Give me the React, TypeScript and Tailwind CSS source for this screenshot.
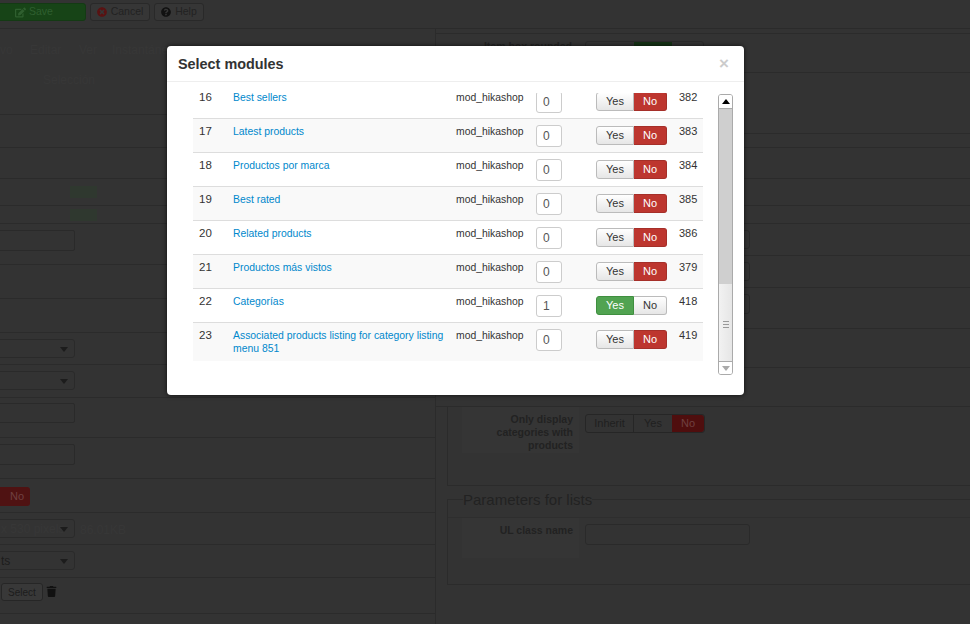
import { FaEdit, FaTimesCircle, FaQuestionCircle, FaTrash } from "react-icons/fa";

interface Module {
  num: number;
  name: string;
  value: number;
  id: number;
  enabled?: boolean;
}

const modules: Module[] = [
  { num: 16, name: "Best sellers", value: 0, id: 382 },
  { num: 17, name: "Latest products", value: 0, id: 383 },
  { num: 18, name: "Productos por marca", value: 0, id: 384 },
  { num: 19, name: "Best rated", value: 0, id: 385 },
  { num: 20, name: "Related products", value: 0, id: 386 },
  { num: 21, name: "Productos más vistos", value: 0, id: 379 },
  { num: 22, name: "Categorías", value: 1, id: 418, enabled: true },
  { num: 23, name: "Associated products listing for category listing menu 851", value: 0, id: 419 },
];

function Caret() {
  return <span className="absolute right-[6px] top-[7px] h-0 w-0 border-x-[4px] border-t-[5px] border-x-transparent border-t-[#1c1c1c]" />;
}

function ModuleRow({ item }: { item: Module }) {
  return (
    <div
      className={`flex shrink-0 border-t border-[#ddd] text-[10.4px] leading-[13px] text-[#333] ${
        item.num === 23 ? "h-[39px]" : "h-[34px]"
      } ${item.num % 2 === 1 ? "bg-[#f9f9f9]" : "bg-white"}`}
    >
      <div className="w-[40px] pl-[6px] pt-[6px] text-[11.5px]">{item.num}</div>
      <div className="w-[223px] pt-[6px] pr-[4px]">
        <a className="text-[#0088cc]">{item.name}</a>
      </div>
      <div className="w-[80px] pt-[6px]">mod_hikashop</div>
      <div className="w-[60px] pt-[6px]">
        <input
          readOnly
          value={item.value}
          className="h-[22px] w-[26px] rounded-[3px] border border-[#ccc] bg-white px-[6px] text-[12px] text-[#555]"
        />
      </div>
      <div className="flex w-[83px] pt-[7px] text-[11px]">
        <span
          className={`flex h-[19px] w-[38px] items-center justify-center rounded-l-[3px] border ${
            item.enabled
              ? "border-[#3f8f3f] bg-[#51a351] text-white"
              : "border-[#bbb] bg-gradient-to-b from-white to-[#e6e6e6] text-[#333]"
          }`}
        >
          Yes
        </span>
        <span
          className={`flex h-[19px] w-[33px] items-center justify-center rounded-r-[3px] border border-l-0 ${
            item.enabled
              ? "border-[#bbb] bg-gradient-to-b from-white to-[#e6e6e6] text-[#333]"
              : "border-[#a52f29] bg-[#bd362f] text-white"
          }`}
        >
          No
        </span>
      </div>
      <div className="pt-[6px] text-[11px]">{item.id}</div>
    </div>
  );
}

function Scrollbar() {
  return (
    <div className="mt-[1px] flex h-[281px] w-[15px] flex-col overflow-hidden rounded-[3px] border border-[#aaa]">
      <div className="flex h-[14px] shrink-0 items-center justify-center border-b border-[#aaa] bg-white">
        <span className="h-0 w-0 border-x-[4px] border-b-[5px] border-x-transparent border-b-black" />
      </div>
      <div className="h-[175px] shrink-0 bg-[#cfcfcf]" />
      <div className="flex h-[77px] shrink-0 items-center justify-center bg-gradient-to-r from-[#f2f2f2] to-[#e6e6e6]">
        <div className="flex flex-col gap-[2px] pt-[4px]">
          <span className="h-px w-[6px] bg-[#999]" />
          <span className="h-px w-[6px] bg-[#999]" />
          <span className="h-px w-[6px] bg-[#999]" />
        </div>
      </div>
      <div className="flex flex-1 items-center justify-center border-t border-[#aaa] bg-white">
        <span className="h-0 w-0 border-x-[4px] border-t-[5px] border-x-transparent border-t-[#aaa]" />
      </div>
    </div>
  );
}

export default function App() {
  return (
    <div className="relative h-[624px] w-[970px] overflow-hidden bg-[#333] font-['Liberation_Sans',Arial,sans-serif] text-[#222]">
      {/* toolbar */}
      <div className="flex h-[29px] gap-[4px] border-b border-[#2b2b2b] pt-[3px] text-[10.5px]">
        <div className="ml-[-10px] flex h-[18px] w-[96px] items-center gap-[3px] rounded-[3px] border border-[#143a14] bg-[#174417] pl-[24px] text-[#2f5f2f]">
          <FaEdit className="text-[11px]" />
          Save
        </div>
        <div className="flex h-[18px] w-[60px] items-center justify-center gap-[4px] rounded-[3px] border border-[#292929] bg-[#363636]">
          <FaTimesCircle className="text-[10px] text-[#5a1212]" />
          Cancel
        </div>
        <div className="flex h-[18px] w-[50px] items-center justify-center gap-[4px] rounded-[3px] border border-[#292929] bg-[#363636]">
          <FaQuestionCircle className="text-[10px] text-[#111]" />
          Help
        </div>
      </div>

      <div className="flex">
        {/* left column */}
        <div className="h-[595px] w-[436px] shrink-0 border-r border-[#2b2b2b] text-[10.5px]">
          <div className="h-[86px] border-b border-[#2b2b2b] pt-[12px] text-[12px] text-[#373737]">
            <div className="flex">
              <span className="w-[30px]">vo</span>
              <span className="w-[49px]">Editar</span>
              <span className="w-[33px]">Ver</span>
              <span>Instantánea</span>
            </div>
            <div className="ml-[43px] mt-[12px]">Selección</div>
          </div>
          <div className="h-[33px] border-b border-[#2b2b2b]" />
          <div className="h-[31px] border-b border-[#2b2b2b]" />
          <div className="flex h-[27px] items-center border-b border-[#2b2b2b] pl-[70px]">
            <span className="h-[12px] w-[27px] bg-[#2f382f]" />
          </div>
          <div className="flex h-[18px] items-center border-b border-[#2b2b2b] pl-[70px]">
            <span className="h-[12px] w-[27px] bg-[#2f382f]" />
          </div>
          <div className="h-[41px] border-b border-[#2b2b2b] pt-[6px]">
            <div className="ml-[-15px] h-[21px] w-[90px] rounded-[2px] border border-[#2a2a2a]" />
          </div>
          <div className="h-[34px] border-b border-[#2b2b2b]" />
          <div className="h-[34px] border-b border-[#2b2b2b]" />
          <div className="h-[32px] border-b border-[#2b2b2b] pt-[6px]">
            <div className="relative ml-[-15px] h-[19px] w-[90px] rounded-[3px] border border-[#2a2a2a]">
              <Caret />
            </div>
          </div>
          <div className="h-[33px] border-b border-[#2b2b2b] pt-[6px]">
            <div className="relative ml-[-15px] h-[19px] w-[90px] rounded-[3px] border border-[#2a2a2a]">
              <Caret />
            </div>
          </div>
          <div className="h-[40px] border-b border-[#2b2b2b] pt-[5px]">
            <div className="ml-[-15px] h-[20px] w-[90px] rounded-[2px] border border-[#2a2a2a]" />
          </div>
          <div className="h-[41px] border-b border-[#2b2b2b] pt-[6px]">
            <div className="ml-[-15px] h-[21px] w-[90px] rounded-[2px] border border-[#2a2a2a]" />
          </div>
          <div className="h-[34px] border-b border-[#2b2b2b] pt-[8px]">
            <div className="flex h-[19px] w-[30px] items-center justify-end rounded-r-[3px] bg-[#4f1212] pr-[6px] text-[11px] text-[#704040]">
              No
            </div>
          </div>
          <div className="flex h-[32px] items-start border-b border-[#2b2b2b] pt-[6px]">
            <div className="relative ml-[-15px] flex h-[19px] w-[90px] items-center justify-start overflow-hidden whitespace-nowrap rounded-[3px] border border-[#2a2a2a] pl-[15px] text-[12px] text-[#373737]">
              x 530 pixels
              <Caret />
            </div>
            <span className="ml-[5px] pt-[2px] text-[12px] text-[#373737]">86.01KB</span>
          </div>
          <div className="h-[33px] border-b border-[#2b2b2b] pt-[6px]">
            <div className="relative ml-[-15px] flex h-[19px] w-[90px] items-center rounded-[3px] border border-[#2a2a2a] pl-[15px] text-[12px] text-[#1c1c1c]">
              ts
              <Caret />
            </div>
          </div>
          <div className="flex h-[36px] items-start gap-[3px] border-b border-[#2b2b2b] pl-px pt-[5px]">
            <div className="flex h-[18px] w-[42px] items-center justify-center rounded-[3px] border border-[#262626] bg-[#383838] text-[10px] text-[#1c1c1c]">
              Select
            </div>
            <FaTrash className="mt-[3px] text-[11px] text-[#111]" />
          </div>
        </div>

        {/* right column */}
        <div className="flex-1 text-[10.5px]">
          <div className="h-[5px] border-b border-[#2b2b2b]" />
          <div className="flex h-[39px] border-b border-[#2b2b2b] pt-[7px]">
            <div className="w-[136px] text-right font-bold leading-[11px]">Item box rounded</div>
            <div className="ml-[13px] flex h-[19px] w-[119px] overflow-hidden rounded-[3px] border border-[#2a2a2a]">
              <span className="w-[48px]" />
              <span className="w-[38px] bg-[#163316]" />
            </div>
          </div>
          <div className="h-[61px] border-b border-[#2b2b2b]" />
          <div className="h-[14px] border-b border-[#2b2b2b]" />
          <div className="h-[31px] border-b border-[#2b2b2b]" />
          <div className="h-[27px] border-b border-[#2b2b2b]" />
          <div className="h-[18px] border-b border-[#2b2b2b]" />
          <div className="h-[32px] border-b border-[#2b2b2b] pt-[6px]">
            <div className="ml-[149px] h-[19px] w-[165px] rounded-[3px] border border-[#2a2a2a]" />
          </div>
          <div className="h-[32px] border-b border-[#2b2b2b] pt-[6px]">
            <div className="ml-[149px] h-[19px] w-[165px] rounded-[3px] border border-[#2a2a2a]" />
          </div>
          <div className="h-[41px] border-b border-[#2b2b2b] pt-[6px]">
            <div className="ml-[149px] h-[20px] w-[165px] rounded-[3px] border border-[#2a2a2a]" />
          </div>
          <div className="h-[39px] border-b border-[#2b2b2b]" />
          <div className="h-[39px] border-b border-[#2b2b2b]" />

          <div className="ml-[11px] flex h-[79px] border-b border-l border-[#2b2b2b]">
            <div className="ml-[14px] h-[46px] w-[117px] bg-[#353535] pl-[20px] pr-[6px] pt-[6px] text-right font-bold leading-[13px]">
              Only display categories with products
            </div>
            <div className="ml-[6px] mt-[7px] flex h-[19px] w-[120px] rounded-[3px] border border-[#262626] text-[11px] text-[#1f1f1f]">
              <span className="flex w-[48px] items-center justify-center border-r border-[#262626]">Inherit</span>
              <span className="flex w-[38px] items-center justify-center">Yes</span>
              <span className="flex flex-1 items-center justify-center rounded-r-[3px] bg-[#4f0e0e] text-[#704040]">No</span>
            </div>
          </div>

          <fieldset className="ml-[11px] mt-[3px] h-[96px] border-y border-l border-[#2b2b2b]">
            <legend className="ml-[15px] text-[15px] leading-[21px] text-[#222]">Parameters for lists</legend>
            <div className="mt-[7px] flex h-[41px] border-t border-[#2e2e2e] pl-[14px]">
              <div className="w-[117px] bg-[#353535] pr-[6px] pt-[6px] text-right font-bold leading-[13px]">UL class name</div>
              <div className="ml-[6px] mt-[6px] h-[21px] w-[165px] rounded-[3px] border border-[#2a2a2a]" />
            </div>
          </fieldset>
        </div>
      </div>

      {/* modal */}
      <div className="absolute left-[167px] top-[46px] h-[349px] w-[577px] rounded-[4px] bg-white shadow-[0_0_5px_rgba(0,0,0,0.7)]">
        <div className="flex h-[36px] items-center justify-between border-b border-[#eee] pl-[11px] pr-[15px]">
          <h3 className="mt-[2px] text-[14.4px] font-bold text-[#333]">Select modules</h3>
          <span className="text-[17px] font-bold leading-none text-[#ccc]">×</span>
        </div>
        <div className="flex pl-[26px] pt-[11px]">
          <div className="flex h-[268px] w-[510px] flex-col justify-end overflow-hidden">
            {modules.map((item) => (
              <ModuleRow key={item.num} item={item} />
            ))}
          </div>
          <div className="ml-[15px]">
            <Scrollbar />
          </div>
        </div>
      </div>
    </div>
  );
}
